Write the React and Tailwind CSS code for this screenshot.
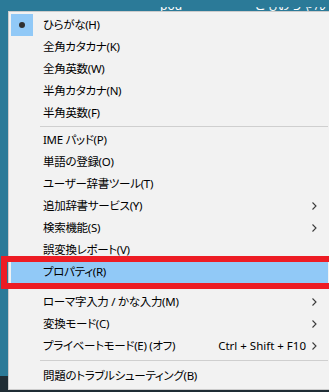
const font = { fontFamily: '"Noto Sans", "Noto Sans CJK JP", sans-serif' };

function Chevron() {
  return (
    <svg width="5" height="8" viewBox="0 0 5 8" className="shrink-0">
      <path d="M0.5 0.5 L4 4 L0.5 7.5" fill="none" stroke="#3a3a3a" strokeWidth="1.1" />
    </svg>
  );
}

function Row({ label, checked, sub, shortcut, active }) {
  return (
    <div className={`mx-[2px] flex h-[22px] items-center ${active ? 'bg-[#91c9f7]' : ''}`}>
      <div className={`flex h-full w-[22px] items-center justify-center ${checked ? 'bg-[#91c9f7]' : ''}`}>
        {checked && <span className="block h-[6px] w-[6px] rounded-full bg-[#303030]" />}
      </div>
      <span className="ml-[10px] flex-1 text-[11.5px] tracking-[-0.3px] text-black [font-feature-settings:'palt']">{label}</span>
      {shortcut && <span className="mr-[6px] text-[11.5px] text-black">{shortcut}</span>}
      <div className="mr-[11px] flex w-[5px] justify-center">{sub && <Chevron />}</div>
    </div>
  );
}

function Sep({ className }) {
  return <div className={`ml-[31px] mr-[2px] h-px bg-[#cfcfcf] ${className}`} />;
}

export default function App() {
  return (
    <div className="relative h-[392px] w-[329px] overflow-hidden bg-[#1f2d35]" style={font}>
      {/* window behind the menu: only the bottom of its title texts shows */}
      <div className="h-[11px] bg-[#2b7a98] pt-[7px]">
        <div className="flex h-[4px] overflow-hidden text-[12px] leading-[12px] text-white">
          <div className="mt-[-7px] flex">
            <span className="ml-[160px]">pod</span>
            <span className="ml-[72px]">ともおちゃん</span>
          </div>
        </div>
      </div>
      <div className="flex">
        <div className="flex w-[8px] shrink-0 flex-col">
          <div className="h-[365px] bg-[#2b7a98]" />
        </div>
        <div className="w-[323px] shrink-0 border border-[#cccccc] bg-[#f2f2f2] pt-[2px] pb-[2px]">
          <Row label="ひらがな(H)" checked />
          <Row label="全角カタカナ(K)" />
          <Row label="全角英数(W)" />
          <Row label="半角カタカナ(N)" />
          <Row label="半角英数(F)" />
          <Sep className="mt-[2px] mb-[2px]" />
          <Row label="IME パッド(P)" />
          <Row label="単語の登録(O)" />
          <Row label="ユーザー辞書ツール(T)" />
          <Row label="追加辞書サービス(Y)" sub />
          <Row label="検索機能(S)" sub />
          <Row label="誤変換レポート(V)" />
          <Row label="プロパティ(R)" active />
          <Sep className="mt-[4px] mb-[3px]" />
          <Row label="ローマ字入力 / かな入力(M)" sub />
          <Row label="変換モード(C)" sub />
          <Row label="プライベートモード(E) (オフ)" sub shortcut="Ctrl + Shift + F10" />
          <Sep className="mt-[3px] mb-[4px]" />
          <Row label="問題のトラブルシューティング(B)" />
        </div>
      </div>
      <div className="absolute left-[1px] top-[256px] h-[33px] w-[340px] border-[6px] border-[#ed1c24]" />
    </div>
  );
}
